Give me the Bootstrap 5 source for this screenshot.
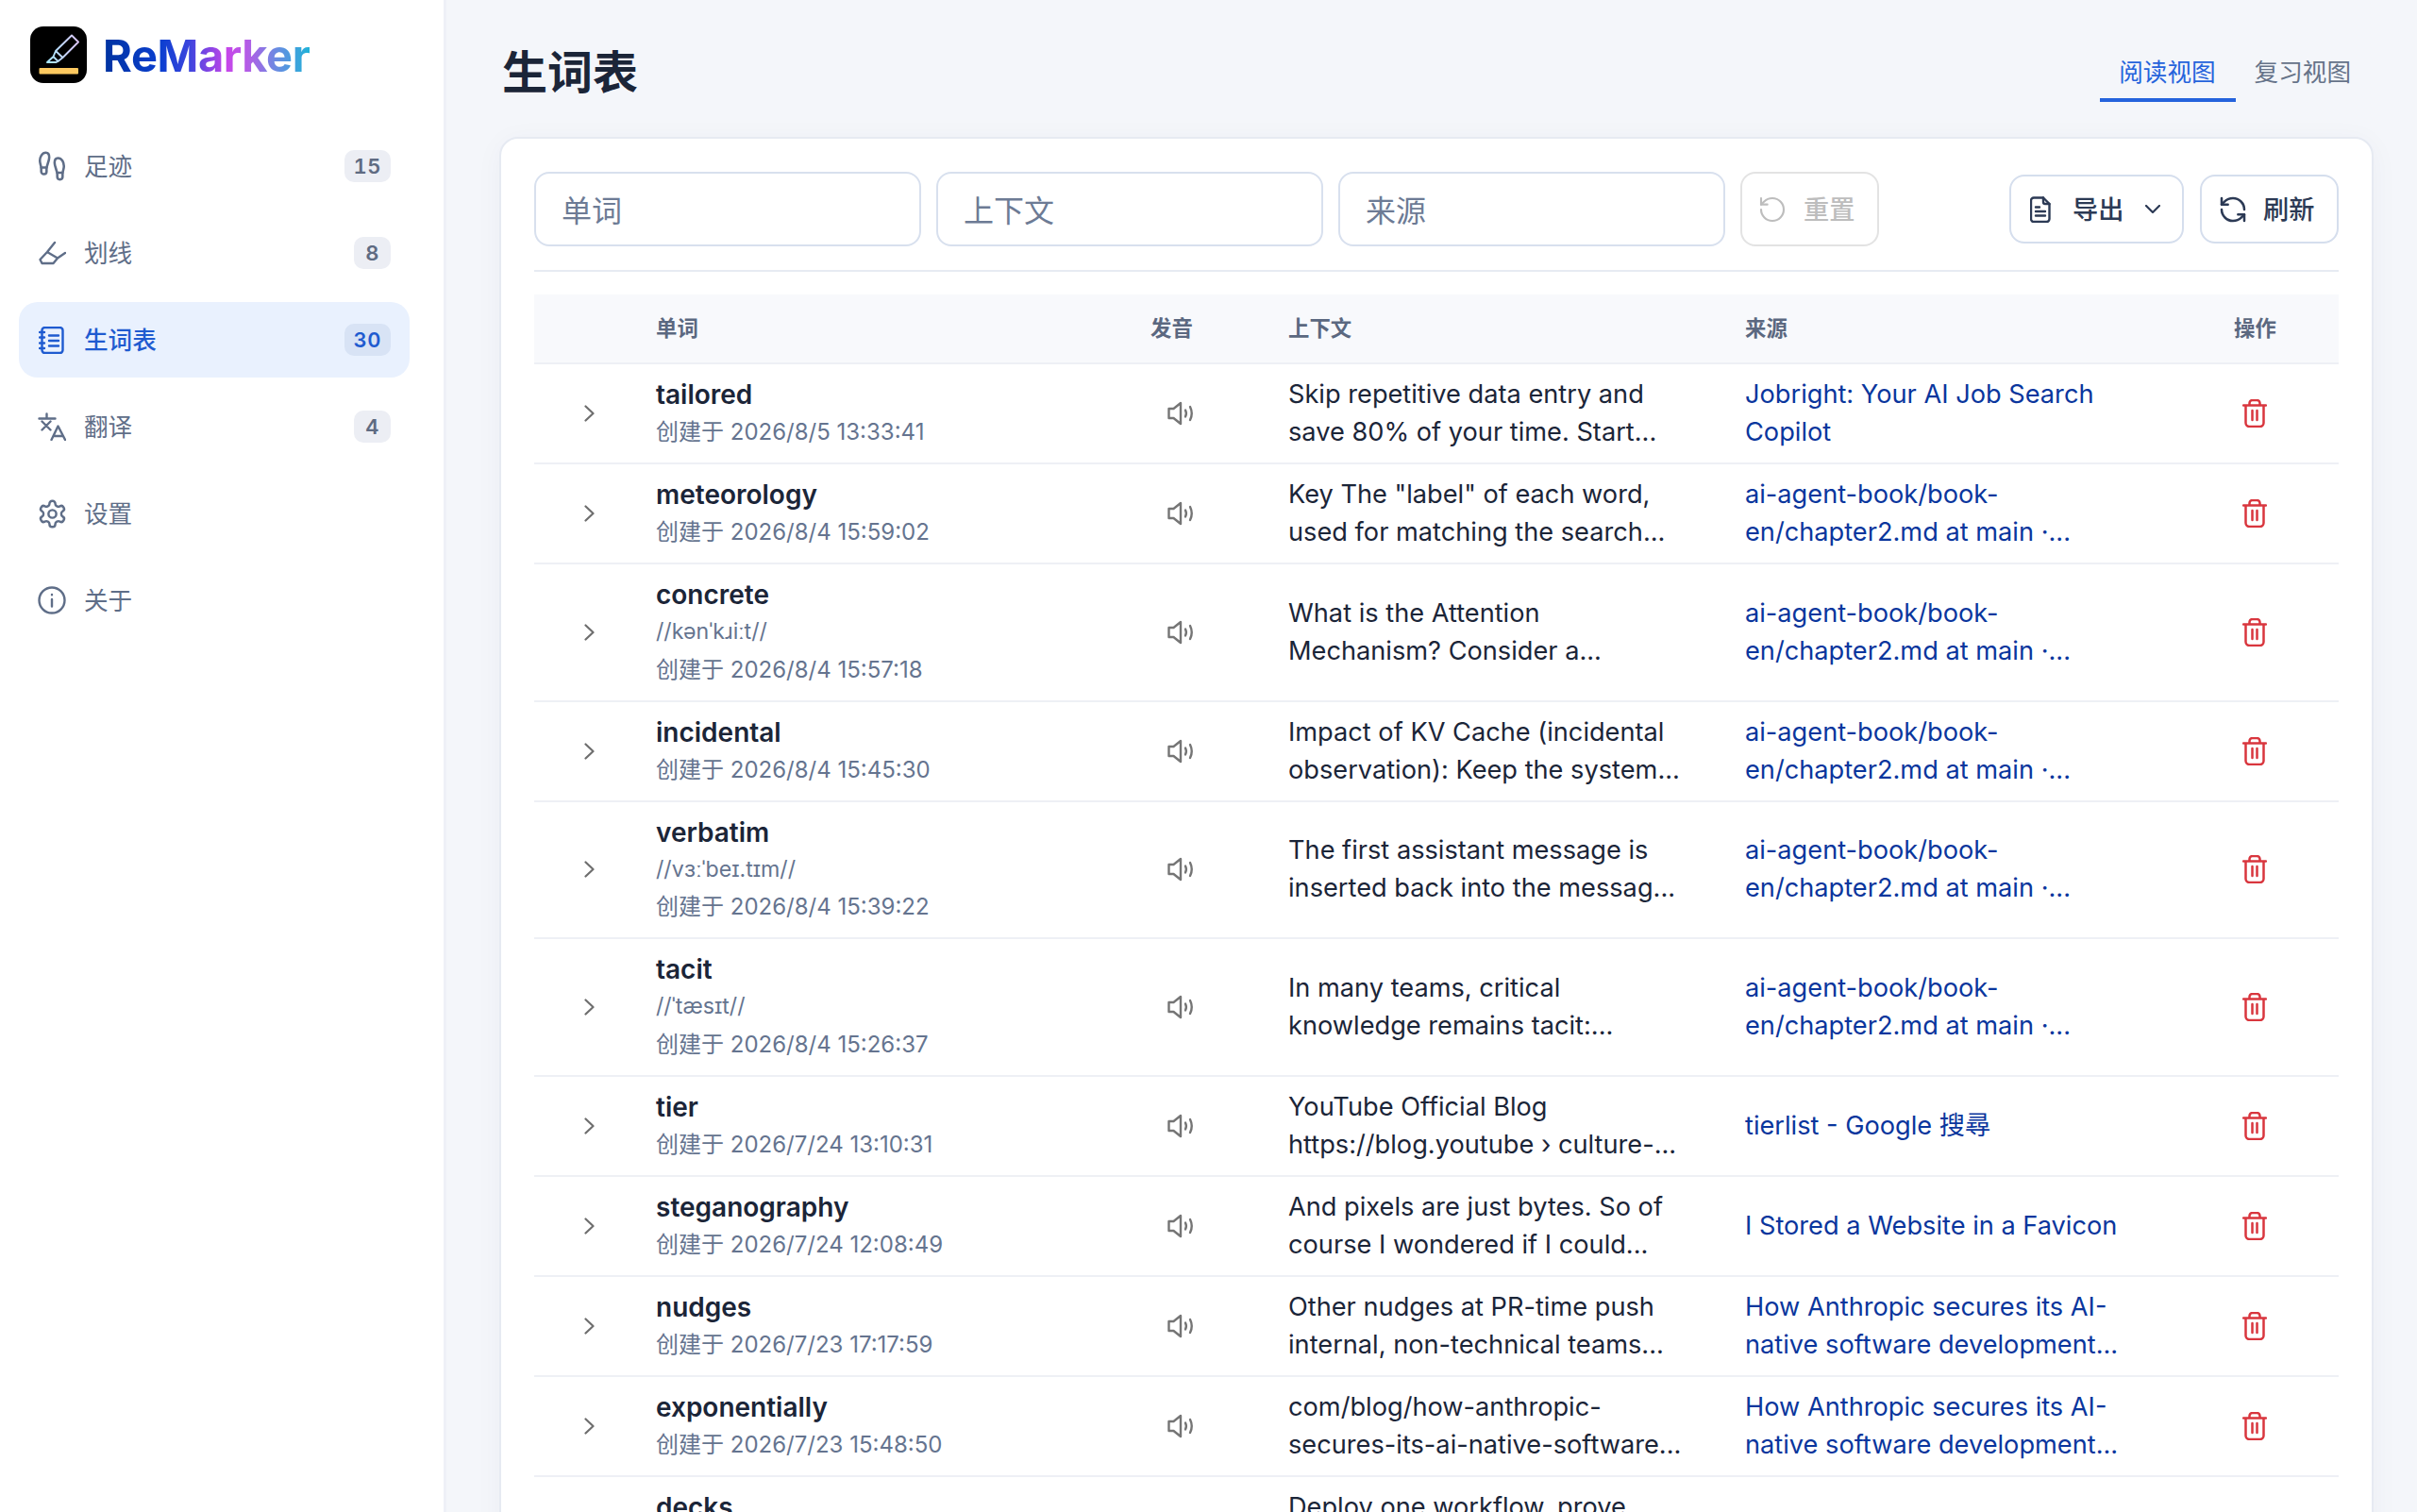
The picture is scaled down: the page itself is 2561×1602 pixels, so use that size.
<!DOCTYPE html>
<html lang="zh-CN">
<head>
<meta charset="utf-8">
<title>ReMarker - 生词表</title>
<link href="https://cdn.jsdelivr.net/npm/bootstrap@5.3.0/dist/css/bootstrap.min.css" rel="stylesheet">
<style>
    html, body { height: 100%; }
    body { background: #f4f6fa; font-family: "Inter", "Noto Sans CJK SC", sans-serif; color: #1b2538; overflow: hidden; }
    svg { display: block; flex: none; fill: none; stroke: currentColor; stroke-linecap: round; stroke-linejoin: round; }

    /* sidebar */
    .side-panel { width: 473px; flex: none; background: #fff; border-right: 3px solid #eef0f7; padding: 28px 36px 0 20px; }
    .brand-row { gap: 17px; padding-left: 12px; margin-bottom: 48px; height: 60px; }
    .brand-name { font-size: 47px; font-weight: 700; line-height: 60px; padding-top: 2px; letter-spacing: -.4px; background: linear-gradient(90deg, #0033a0 0%, #0b3fd0 28%, #3d45de 42%, #c645ea 60%, #b45ce6 70%, #6a8be2 84%, #1fb2d8 100%); -webkit-background-clip: text; background-clip: text; color: transparent; }
    .side-nav { gap: 12px; }
    .side-link { height: 80px; padding: 0 20px 0 21px; gap: 20px; border-radius: 20px; font-size: 25.6px; color: #5f6e88; text-decoration: none; }
    .side-icon { width: 28px; height: 34px; flex: none; display: flex; align-items: center; justify-content: center; }
    .side-text { flex-grow: 1; padding-top: 2px; }
    .side-link.is-active { background: #e9f1fe; color: #1f5bd0; font-weight: 500; }
    .count-pill { height: 34px; min-width: 39px; padding: 0 10px; border-radius: 10px; background: #eceef4; color: #5f6b82; font-size: 22px; font-weight: 600; font-variant-numeric: tabular-nums; letter-spacing: .5px; line-height: 34px; text-align: center; }
    .is-active .count-pill { background: #d8e3f5; color: #1f5bd0; }

    /* main */
    .main-area { min-width: 0; padding: 0 46px 0 56px; }
    .page-head { height: 145px; }
    .page-title { font-size: 48px; font-weight: 700; margin: 0 0 0 3px; padding-top: 8px; color: #1b2538; }
    .view-tabs { align-self: flex-start; margin-top: 48px; }
    .view-tab { height: 60px; padding: 0 20px; font-size: 25.6px; line-height: 58px; color: #667389; text-decoration: none; border-bottom: 4px solid transparent; }
    .view-tab.is-active { color: #2563dc; border-bottom-color: #2563dc; padding-right: 21px; }
    .view-tab:last-child { padding-right: 24px; }
    .sheet { --bs-card-border-radius: 20px; --bs-card-inner-border-radius: 18px; border: 2px solid #e6eaf2; box-shadow: 0 4px 30px rgba(30, 50, 100, .04); padding: 35px 35px 0 35px; min-height: 1500px; }

    .filter-bar { gap: 16px; padding-bottom: 25px; border-bottom: 2px solid #e7ebf2; margin-bottom: 24px; }
    .filter-input { width: 410px; height: 79px; flex: none; border: 2px solid #d8e0ee; border-radius: 16px; padding: 3px 27px 0; font-size: 32px; }
    .filter-input::placeholder { color: #6d7b95; }
    .tool-btn { display: flex; align-items: center; height: 73px; border: 2px solid #d5deed; border-radius: 16px; background: #fff; color: #2c3a55; font-size: 27.2px; font-weight: 500; line-height: 1; padding: 3px 0 0; white-space: nowrap; }
    .tool-btn svg { margin-top: -3px; }
    .tool-btn.btn-reset { height: 79px; width: 147px; padding-left: 16px; gap: 17px; border-color: #e3e3e3; color: #bdbdbd; opacity: 1; }
    .tool-group { gap: 17px; }
    .btn-export { width: 185px; padding-left: 20px; gap: 23px; }
    .btn-refresh { width: 147px; padding-left: 17px; gap: 16px; }

    /* table */
    .word-table { table-layout: fixed; width: 1912px; margin: 0; --bs-table-color: #1b2538; --bs-table-border-color: #eef0f5; }
    .word-table > :not(caption) > * > * { padding: 12px 26px; border-bottom-width: 2px; font-size: 27.2px; line-height: 40px; white-space: nowrap; }
    .word-table thead th { background: #f8f9fc; color: #5b6880; font-size: 22.4px; font-weight: 600; line-height: 48px; padding-top: 12px; padding-bottom: 12px; }
    .word-title { font-size: 28px; font-weight: 600; }
    .word-meta { font-size: 24px; color: #65748f; }
    .word-phon { font-size: 23.2px; line-height: 39.5px; color: #65748f; }
    .word-table a { color: #0a369d; text-decoration: none; }
    .word-table .cell-chevron { padding-left: 53px; padding-right: 0; color: #6e6e6e; }
    .word-table .cell-speak { padding-left: 44px; padding-right: 0; color: #757575; }
    .word-table .cell-trash { padding-left: 35px; padding-right: 0; color: #d9363e; }
    .word-table tr.row-cut td { vertical-align: top; border-bottom: 0; }
</style>
</head>
<body>

<svg width="0" height="0" class="position-absolute">
    <defs>
        <linearGradient id="penFade" x1="0" x2="1" y1="0" y2="0"><stop offset="0" stop-color="#a6e6fb"/><stop offset="1" stop-color="#dcc6fb"/></linearGradient>
    </defs>
    <symbol id="i-chevron" viewBox="0 0 11 18"><path d="M1.5 1.5 9.5 9l-8 7.5" stroke-width="2.2"/></symbol>
    <symbol id="i-speak" viewBox="0 0 30 26"><path d="M1.5 8h5L14 2v22l-7.5-6h-5z" stroke-width="2.4"/><path d="M19 9.5q1.8 3.5 0 7M24 6q3.5 7 0 14" stroke-width="2.4"/></symbol>
    <symbol id="i-trash" viewBox="0 0 26 30"><path d="M1 6.5h24M7.5 6V4a3 3 0 0 1 3-3h5a3 3 0 0 1 3 3v2M3.5 6.5V25a4 4 0 0 0 4 4h11a4 4 0 0 0 4-4V6.5M10.500 12v10M15.500 12v10" stroke-width="2.5"/></symbol>
</svg>

<div class="d-flex h-100">
    <aside class="side-panel">
        <div class="brand-row d-flex align-items-center">
            <svg width="60" height="60" viewBox="0 0 60 60">
                <rect width="60" height="60" rx="14" fill="#000" stroke="none"/>
                <rect x="9.500" y="44" width="41.500" height="6.500" rx="1" fill="#fdc960" stroke="none"/>
                <path d="M44 9.500 51 16.500 34.500 33 27 26zM27 26l-2.500 6 5 5 5-4M24.500 32 18 38h9.500l2-1" stroke="url(#penFade)" stroke-width="1.900"/>
            </svg>
            <span class="brand-name">ReMarker</span>
        </div>
        <nav class="nav flex-column flex-nowrap side-nav">
            <a class="side-link d-flex align-items-center" href="#">
                <span class="side-icon"><svg viewBox="0 0 24 24" width="34" height="34" stroke-width="1.800"><path d="M4 16v-2.380C4 11.500 2.970 10.500 3 8c.03-2.720 1.490-6 4.500-6C9.370 2 10 3.800 10 5.500c0 3.110-2 5.660-2 8.680V16a2 2 0 1 1-4 0Z"/><path d="M20 20v-2.380c0-2.120 1.030-3.120 1-5.620-.03-2.720-1.490-6-4.500-6C14.630 6 14 7.800 14 9.500c0 3.110 2 5.660 2 8.680V20a2 2 0 1 0 4 0Z"/><path d="M16 17h4M4 13h4"/></svg></span>
                <span class="side-text">足迹</span><span class="count-pill">15</span>
            </a>
            <a class="side-link d-flex align-items-center" href="#">
                <span class="side-icon"><svg viewBox="0 0 30 28" width="30" height="28" stroke-width="2.400"><path d="M18 3l-8 10-7.500 8 2 4h12l4.500-5.500L10 13M21 19.500l8-5.500"/></svg></span>
                <span class="side-text">划线</span><span class="count-pill">8</span>
            </a>
            <a class="side-link is-active d-flex align-items-center" href="#">
                <span class="side-icon"><svg viewBox="0 0 28 29" width="28" height="29" stroke-width="2.400"><rect x="3.500" y="1" width="22" height="27" rx="3"/><path d="M1 6h5M1 11.500h5M1 17.500h5M1 23h5M11 9.500h10M11 15h10M11 20.500h10"/></svg></span>
                <span class="side-text">生词表</span><span class="count-pill">30</span>
            </a>
            <a class="side-link d-flex align-items-center" href="#">
                <span class="side-icon"><svg viewBox="0 0 30 30" width="30" height="30" stroke-width="2.400"><path d="M1.500 6.500h17M9.500 1.500v4M4.500 9.500l9 9M13.500 9.500l-9 9M14.500 29l7-14.500L29 29M16.500 25h10"/></svg></span>
                <span class="side-text">翻译</span><span class="count-pill">4</span>
            </a>
            <a class="side-link d-flex align-items-center" href="#">
                <span class="side-icon"><svg viewBox="0 0 24 24" width="33" height="33" stroke-width="1.800"><path d="M12.220 2h-.44a2 2 0 0 0-2 2v.18a2 2 0 0 1-1 1.730l-.43.25a2 2 0 0 1-2 0l-.15-.08a2 2 0 0 0-2.730.73l-.22.38a2 2 0 0 0 .73 2.730l.15.1a2 2 0 0 1 1 1.720v.51a2 2 0 0 1-1 1.740l-.15.09a2 2 0 0 0-.73 2.730l.22.38a2 2 0 0 0 2.730.73l.15-.08a2 2 0 0 1 2 0l.43.25a2 2 0 0 1 1 1.730V20a2 2 0 0 0 2 2h.44a2 2 0 0 0 2-2v-.18a2 2 0 0 1 1-1.730l.43-.25a2 2 0 0 1 2 0l.15.08a2 2 0 0 0 2.730-.73l.22-.39a2 2 0 0 0-.73-2.730l-.15-.08a2 2 0 0 1-1-1.740v-.5a2 2 0 0 1 1-1.740l.15-.09a2 2 0 0 0 .73-2.730l-.22-.38a2 2 0 0 0-2.730-.73l-.15.08a2 2 0 0 1-2 0l-.43-.25a2 2 0 0 1-1-1.730V4a2 2 0 0 0-2-2z"/><circle cx="12" cy="12" r="3"/></svg></span>
                <span class="side-text">设置</span>
            </a>
            <a class="side-link d-flex align-items-center" href="#">
                <span class="side-icon"><svg viewBox="0 0 30 30" width="30" height="30" stroke-width="2.400"><circle cx="15" cy="15" r="13.500"/><path d="M15 14v7.500M15 9v.2"/></svg></span>
                <span class="side-text">关于</span>
            </a>
        </nav>
    </aside>

    <main class="main-area flex-grow-1">
        <header class="page-head d-flex align-items-center justify-content-between">
            <h1 class="page-title">生词表</h1>
            <div class="view-tabs d-flex">
                <a class="view-tab is-active" href="#">阅读视图</a>
                <a class="view-tab" href="#">复习视图</a>
            </div>
        </header>

        <section class="card sheet">
            <div class="filter-bar d-flex align-items-center">
                <input class="form-control filter-input" type="text" placeholder="单词">
                <input class="form-control filter-input" type="text" placeholder="上下文">
                <input class="form-control filter-input" type="text" placeholder="来源">
                <button class="btn tool-btn btn-reset" type="button" disabled>
                    <svg viewBox="0 0 24 24" width="32" height="32" stroke-width="1.600"><path d="M3 12a9 9 0 1 0 9-9 9.750 9.750 0 0 0-6.740 2.740L3 8"/><path d="M3 3v5h5"/></svg>
                    重置
                </button>
                <div class="tool-group d-flex ms-auto align-items-center">
                    <button class="btn tool-btn btn-export" type="button">
                        <svg viewBox="0 0 22 28" width="22" height="28" stroke-width="2.400"><path d="M4 1.500h10l6.500 6.500v16a3 3 0 0 1-3 3H4a3 3 0 0 1-3-3V4.500a3 3 0 0 1 3-3z"/><path d="M14 1.500V6a2 2 0 0 0 2 2h4.500M6 11.500h4M6 16h10M6 20.500h10"/></svg>
                        导出
                        <svg viewBox="0 0 16 9" width="16" height="9" stroke-width="2.200"><path d="M1 1l7 7 7-7"/></svg>
                    </button>
                    <button class="btn tool-btn btn-refresh" type="button">
                        <svg viewBox="0 0 24 24" width="32" height="32" stroke-width="1.900"><path d="M21 12a9 9 0 0 0-9-9 9.750 9.750 0 0 0-6.740 2.740L3 8"/><path d="M3 3v5h5"/><path d="M3 12a9 9 0 0 0 9 9 9.750 9.750 0 0 0 6.740-2.740L21 16"/><path d="M16 16h5v5"/></svg>
                        刷新
                    </button>
                </div>
            </div>

            <table class="table align-middle word-table">
                <colgroup>
                    <col style="width:103px"><col style="width:524px"><col style="width:146px"><col style="width:484px"><col style="width:518px"><col style="width:137px">
                </colgroup>
                <thead>
                    <tr><th></th><th>单词</th><th>发音</th><th>上下文</th><th>来源</th><th>操作</th></tr>
                </thead>
                <tbody>
                    <tr>
                        <td class="cell-chevron"><svg width="11" height="18"><use href="#i-chevron"/></svg></td>
                        <td><div class="word-title">tailored</div><div class="word-meta">创建于 2026/8/5 13:33:41</div></td>
                        <td class="cell-speak"><svg width="30" height="26"><use href="#i-speak"/></svg></td>
                        <td>Skip repetitive data entry and<br>save 80% of your time. Start...</td>
                        <td><a href="#">Jobright: Your AI Job Search<br>Copilot</a></td>
                        <td class="cell-trash"><svg width="26" height="30"><use href="#i-trash"/></svg></td>
                    </tr>
                    <tr>
                        <td class="cell-chevron"><svg width="11" height="18"><use href="#i-chevron"/></svg></td>
                        <td><div class="word-title">meteorology</div><div class="word-meta">创建于 2026/8/4 15:59:02</div></td>
                        <td class="cell-speak"><svg width="30" height="26"><use href="#i-speak"/></svg></td>
                        <td>Key The "label" of each word,<br>used for matching the search...</td>
                        <td><a href="#">ai-agent-book/book-<br>en/chapter2.md at main ·...</a></td>
                        <td class="cell-trash"><svg width="26" height="30"><use href="#i-trash"/></svg></td>
                    </tr>
                    <tr>
                        <td class="cell-chevron"><svg width="11" height="18"><use href="#i-chevron"/></svg></td>
                        <td><div class="word-title">concrete</div><div class="word-phon">//kənˈkɹiːt//</div><div class="word-meta">创建于 2026/8/4 15:57:18</div></td>
                        <td class="cell-speak"><svg width="30" height="26"><use href="#i-speak"/></svg></td>
                        <td>What is the Attention<br>Mechanism? Consider a...</td>
                        <td><a href="#">ai-agent-book/book-<br>en/chapter2.md at main ·...</a></td>
                        <td class="cell-trash"><svg width="26" height="30"><use href="#i-trash"/></svg></td>
                    </tr>
                    <tr>
                        <td class="cell-chevron"><svg width="11" height="18"><use href="#i-chevron"/></svg></td>
                        <td><div class="word-title">incidental</div><div class="word-meta">创建于 2026/8/4 15:45:30</div></td>
                        <td class="cell-speak"><svg width="30" height="26"><use href="#i-speak"/></svg></td>
                        <td>Impact of KV Cache (incidental<br>observation): Keep the system...</td>
                        <td><a href="#">ai-agent-book/book-<br>en/chapter2.md at main ·...</a></td>
                        <td class="cell-trash"><svg width="26" height="30"><use href="#i-trash"/></svg></td>
                    </tr>
                    <tr>
                        <td class="cell-chevron"><svg width="11" height="18"><use href="#i-chevron"/></svg></td>
                        <td><div class="word-title">verbatim</div><div class="word-phon">//vɜːˈbeɪ.tɪm//</div><div class="word-meta">创建于 2026/8/4 15:39:22</div></td>
                        <td class="cell-speak"><svg width="30" height="26"><use href="#i-speak"/></svg></td>
                        <td>The first assistant message is<br>inserted back into the messag...</td>
                        <td><a href="#">ai-agent-book/book-<br>en/chapter2.md at main ·...</a></td>
                        <td class="cell-trash"><svg width="26" height="30"><use href="#i-trash"/></svg></td>
                    </tr>
                    <tr>
                        <td class="cell-chevron"><svg width="11" height="18"><use href="#i-chevron"/></svg></td>
                        <td><div class="word-title">tacit</div><div class="word-phon">//ˈtæsɪt//</div><div class="word-meta">创建于 2026/8/4 15:26:37</div></td>
                        <td class="cell-speak"><svg width="30" height="26"><use href="#i-speak"/></svg></td>
                        <td>In many teams, critical<br>knowledge remains tacit:...</td>
                        <td><a href="#">ai-agent-book/book-<br>en/chapter2.md at main ·...</a></td>
                        <td class="cell-trash"><svg width="26" height="30"><use href="#i-trash"/></svg></td>
                    </tr>
                    <tr>
                        <td class="cell-chevron"><svg width="11" height="18"><use href="#i-chevron"/></svg></td>
                        <td><div class="word-title">tier</div><div class="word-meta">创建于 2026/7/24 13:10:31</div></td>
                        <td class="cell-speak"><svg width="30" height="26"><use href="#i-speak"/></svg></td>
                        <td>YouTube Official Blog<br>https://blog.youtube › culture-...</td>
                        <td><a href="#">tierlist - Google 搜尋</a></td>
                        <td class="cell-trash"><svg width="26" height="30"><use href="#i-trash"/></svg></td>
                    </tr>
                    <tr>
                        <td class="cell-chevron"><svg width="11" height="18"><use href="#i-chevron"/></svg></td>
                        <td><div class="word-title">steganography</div><div class="word-meta">创建于 2026/7/24 12:08:49</div></td>
                        <td class="cell-speak"><svg width="30" height="26"><use href="#i-speak"/></svg></td>
                        <td>And pixels are just bytes. So of<br>course I wondered if I could...</td>
                        <td><a href="#">I Stored a Website in a Favicon</a></td>
                        <td class="cell-trash"><svg width="26" height="30"><use href="#i-trash"/></svg></td>
                    </tr>
                    <tr>
                        <td class="cell-chevron"><svg width="11" height="18"><use href="#i-chevron"/></svg></td>
                        <td><div class="word-title">nudges</div><div class="word-meta">创建于 2026/7/23 17:17:59</div></td>
                        <td class="cell-speak"><svg width="30" height="26"><use href="#i-speak"/></svg></td>
                        <td>Other nudges at PR-time push<br>internal, non-technical teams...</td>
                        <td><a href="#">How Anthropic secures its AI-<br>native software development...</a></td>
                        <td class="cell-trash"><svg width="26" height="30"><use href="#i-trash"/></svg></td>
                    </tr>
                    <tr>
                        <td class="cell-chevron"><svg width="11" height="18"><use href="#i-chevron"/></svg></td>
                        <td><div class="word-title">exponentially</div><div class="word-meta">创建于 2026/7/23 15:48:50</div></td>
                        <td class="cell-speak"><svg width="30" height="26"><use href="#i-speak"/></svg></td>
                        <td>com/blog/how-anthropic-<br>secures-its-ai-native-software...</td>
                        <td><a href="#">How Anthropic secures its AI-<br>native software development...</a></td>
                        <td class="cell-trash"><svg width="26" height="30"><use href="#i-trash"/></svg></td>
                    </tr>
                    <tr class="row-cut">
                        <td></td>
                        <td><div class="word-title">decks</div></td>
                        <td></td>
                        <td>Deploy one workflow, prove</td>
                        <td></td>
                        <td></td>
                    </tr>
                </tbody>
            </table>
        </section>
    </main>
</div>

<script src="https://cdn.jsdelivr.net/npm/bootstrap@5.3.0/dist/js/bootstrap.bundle.min.js"></script>
</body>
</html>
